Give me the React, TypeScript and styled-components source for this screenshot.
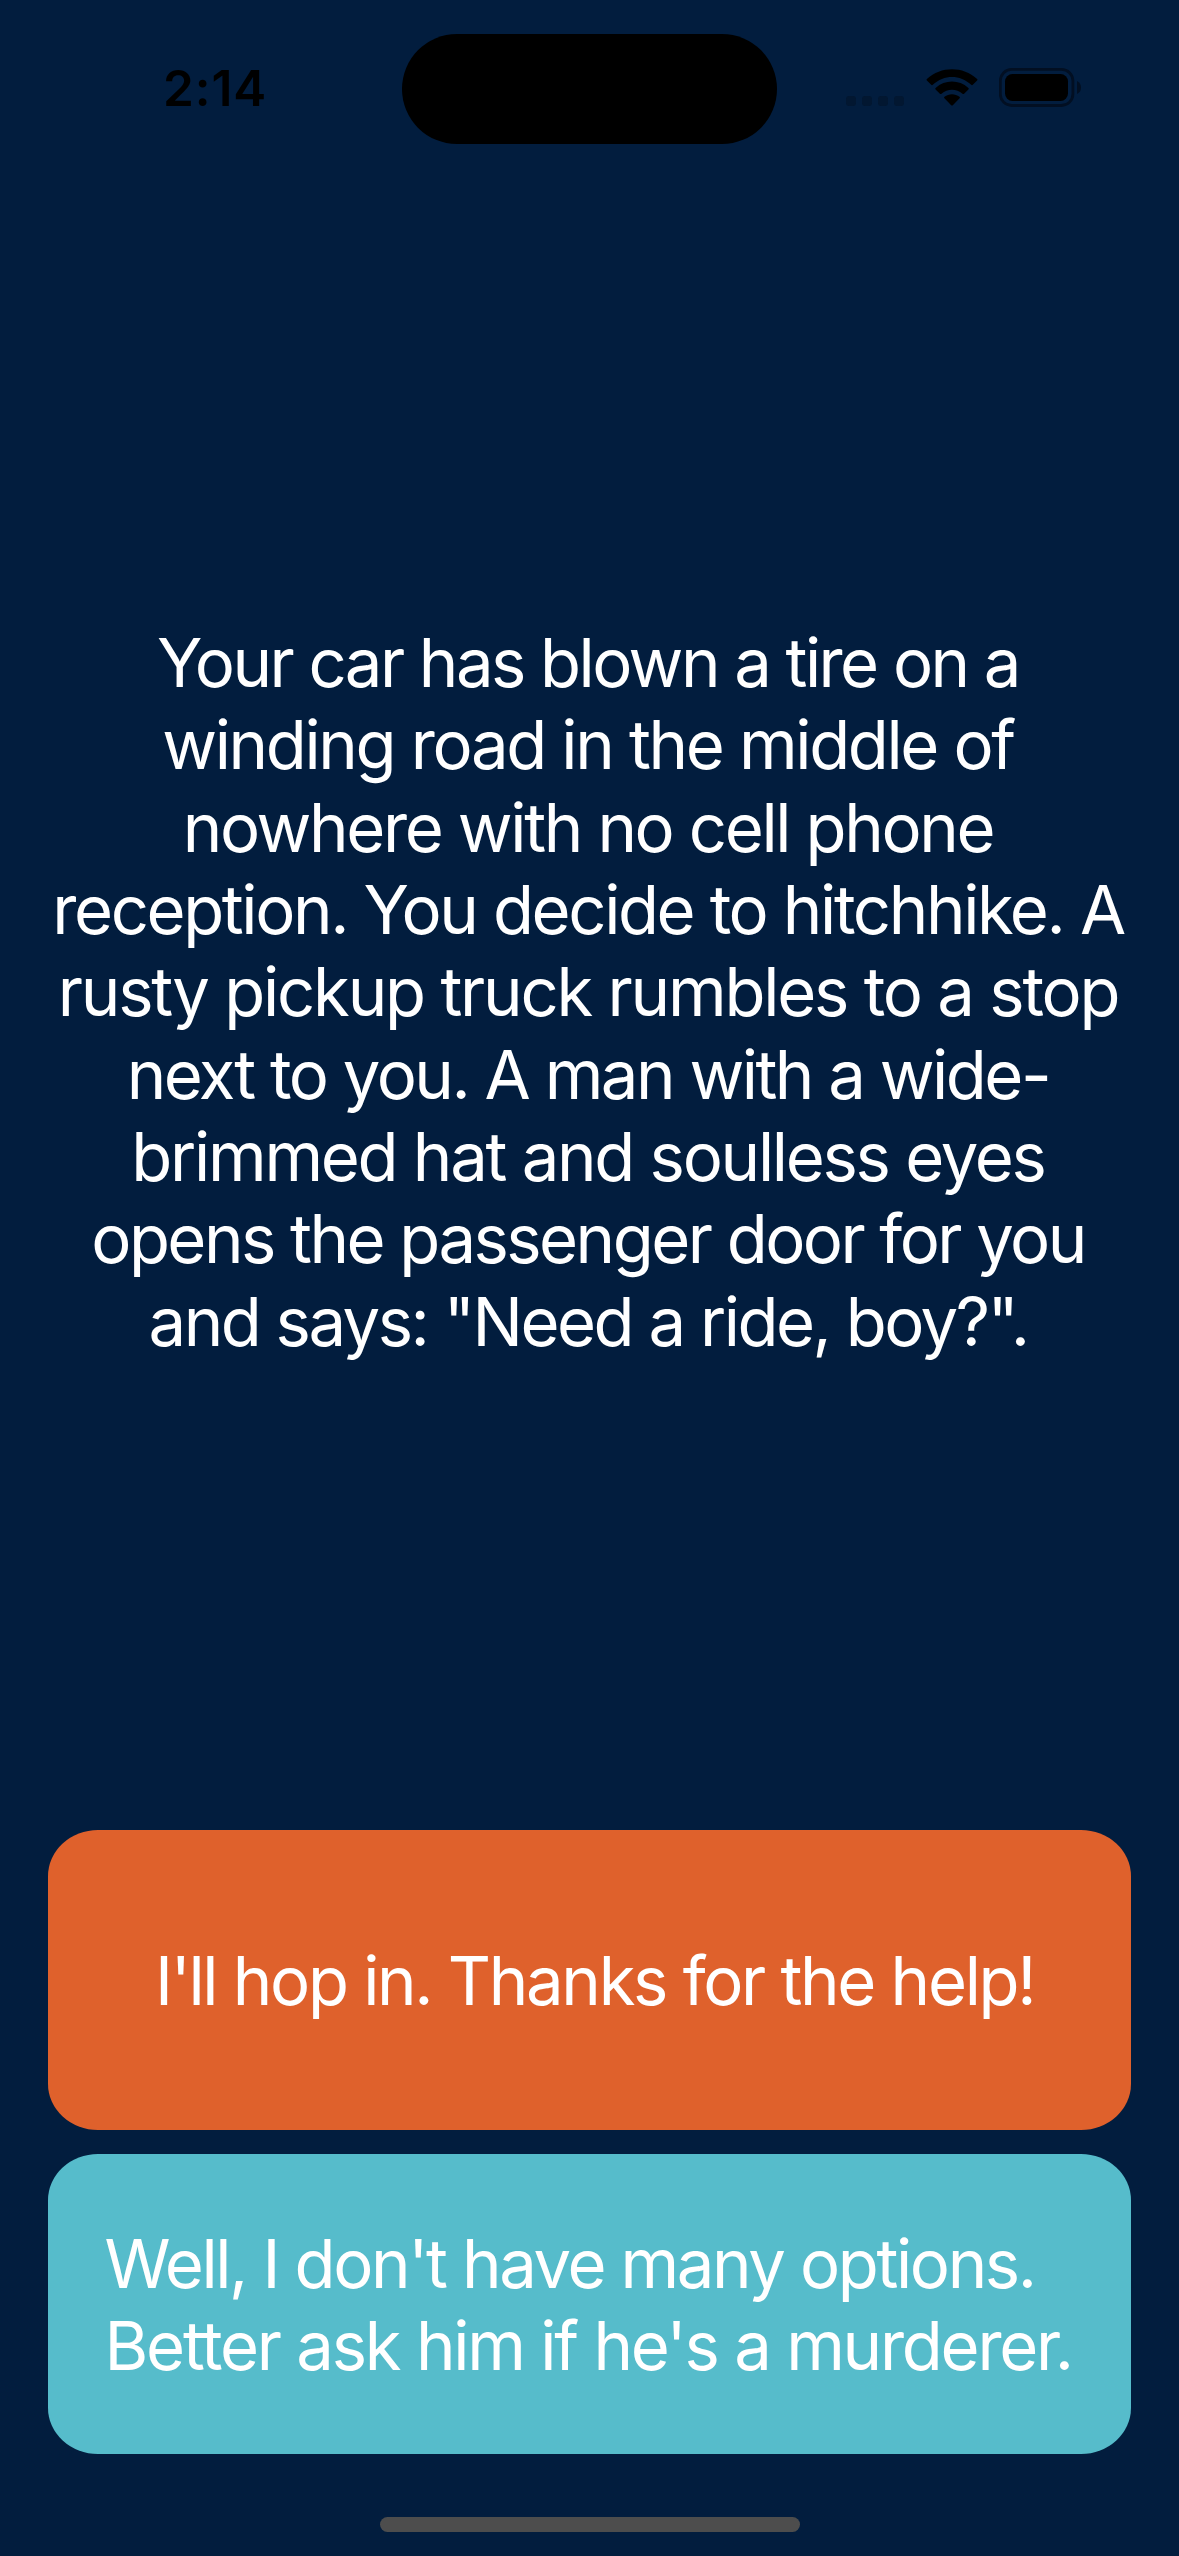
import React from 'react';
import styled, { createGlobalStyle } from 'styled-components';

const GlobalStyle = createGlobalStyle`
  *, *::before, *::after {
    box-sizing: border-box;
  }
  body {
    margin: 0;
    background: #021d3e;
  }
`;

const Screen = styled.main`
  display: flex;
  flex-direction: column;
  width: 1179px;
  height: 2556px;
  overflow: hidden;
  background: #021d3e;
  color: #fff;
  font-family: Inter, 'Liberation Sans', sans-serif;
`;

const StatusBar = styled.header`
  display: grid;
  grid-template-columns: 402px 375px 402px;
  height: 177px;
  padding-top: 33.5px;
  align-items: start;
  color: #000;
`;

const Time = styled.time`
  padding: 24.5px 0 0 163px;
  font-size: 49.5px;
  font-weight: 600;
  line-height: 60px;
  letter-spacing: 0.9px;
`;

const DynamicIsland = styled.div`
  height: 110.5px;
  border-radius: 55.5px;
  background: #000;
`;

const StatusIcons = styled.div`
  display: flex;
  align-items: flex-end;
  height: 74.5px;
  padding-left: 69px;
`;

const Signal = styled.div`
  display: flex;
  gap: 6px;
  margin: 0 22px 2px 0;
`;

const SignalDot = styled.span`
  width: 10px;
  height: 10px;
  border-radius: 3px;
  background: #021731;
`;

const WifiIcon = styled.svg`
  width: 52px;
  height: 38px;
  margin: 0 21px 1px 0;
`;

const BatteryIcon = styled.svg`
  width: 83px;
  height: 41px;
`;

const Story = styled.section`
  display: flex;
  flex: 1;
  align-items: center;
  justify-content: center;
`;

const StoryText = styled.p`
  margin: 0;
  padding: 2px 3px 0 0;
  text-align: center;
`;

const Line = styled.span<{ $tracking: number }>`
  display: block;
  font-size: 67px;
  line-height: 82.3px;
  letter-spacing: ${({ $tracking }) => $tracking}px;
  white-space: nowrap;
`;

const Choices = styled.nav`
  display: flex;
  flex-direction: column;
  gap: 24px;
  padding: 24px 48px 63px;
`;

const ChoiceButton = styled.button<{ $fill: string; $inset: number }>`
  display: flex;
  flex-direction: column;
  justify-content: center;
  height: 300px;
  padding: 2px 0 0 ${({ $inset }) => $inset}px;
  border: 0;
  border-radius: 50px / 46px;
  background: ${({ $fill }) => $fill};
  color: inherit;
  font-family: inherit;
  text-align: left;
`;

const HomeIndicator = styled.div`
  width: 420px;
  height: 15px;
  margin: 0 auto 24px;
  border-radius: 7.5px;
  background: #4d4d4d;
`;

type TextLine = { text: string; tracking: number };

const story: TextLine[] = [
  { text: 'Your car has blown a tire on a', tracking: -2.56 },
  { text: 'winding road in the middle of', tracking: -2.36 },
  { text: 'nowhere with no cell phone', tracking: -2.38 },
  { text: 'reception. You decide to hitchhike. A', tracking: -2.39 },
  { text: 'rusty pickup truck rumbles to a stop', tracking: -2.24 },
  { text: 'next to you. A man with a wide-', tracking: -2.5 },
  { text: 'brimmed hat and soulless eyes', tracking: -2.29 },
  { text: 'opens the passenger door for you', tracking: -2.55 },
  { text: 'and says: "Need a ride, boy?".', tracking: -2.5 },
];

const choices: { fill: string; inset: number; lines: TextLine[] }[] = [
  {
    fill: '#df612c',
    inset: 107,
    lines: [{ text: "I'll hop in. Thanks for the help!", tracking: -2.32 }],
  },
  {
    fill: '#56bccb',
    inset: 56.5,
    lines: [
      { text: "Well, I don't have many options.", tracking: -2.38 },
      { text: "Better ask him if he's a murderer.", tracking: -2.25 },
    ],
  },
];

const renderLines = (lines: TextLine[]) =>
  lines.map(({ text, tracking }) => (
    <Line key={text} $tracking={tracking}>
      {text}
    </Line>
  ));

export default function App() {
  return (
    <>
      <GlobalStyle />
      <Screen>
        <StatusBar>
          <Time>2:14</Time>
          <DynamicIsland />
          <StatusIcons>
            <Signal>
              {[0, 1, 2, 3].map((dot) => (
                <SignalDot key={dot} />
              ))}
            </Signal>
            <WifiIcon viewBox="0 0 52 38" aria-hidden="true">
              <path d="M0.9 11.5 Q0.1 10.8 0.9 10 C15 -3 37 -3 51.1 10 Q51.9 10.8 51.1 11.5 L46.8 15.8 Q46 16.6 45.2 15.8 C34 5.3 18 5.3 6.8 15.8 Q6 16.6 5.2 15.8 Z" />
              <path d="M9.6 20.4 Q8.8 19.6 9.6 18.9 C19 10.5 33 10.5 42.4 18.9 Q43.2 19.6 42.4 20.4 L38.1 24.7 Q37.3 25.4 36.5 24.7 C30.5 19.4 21.5 19.4 15.5 24.7 Q14.7 25.4 13.9 24.7 Z" />
              <path d="M18.4 29.3 Q17.6 28.5 18.5 27.8 C22.8 24.4 29.2 24.4 33.5 27.8 Q34.4 28.5 33.6 29.3 L26.8 36.2 Q26 37 25.2 36.2 Z" />
            </WifiIcon>
            <BatteryIcon viewBox="0 0 83 41" aria-hidden="true">
              <rect x="1.3" y="2.3" width="72.6" height="36.2" rx="11.5" fill="none" stroke="#020f22" strokeWidth="2.8" />
              <rect x="6" y="7" width="63" height="27" rx="7.5" />
              <path d="M78 14 Q82 16 82 20.5 Q82 25 78 27 Z" fill="#020f22" />
            </BatteryIcon>
          </StatusIcons>
        </StatusBar>
        <Story>
          <StoryText>{renderLines(story)}</StoryText>
        </Story>
        <Choices>
          {choices.map(({ fill, inset, lines }) => (
            <ChoiceButton key={fill} type="button" $fill={fill} $inset={inset}>
              {renderLines(lines)}
            </ChoiceButton>
          ))}
        </Choices>
        <HomeIndicator />
      </Screen>
    </>
  );
}
